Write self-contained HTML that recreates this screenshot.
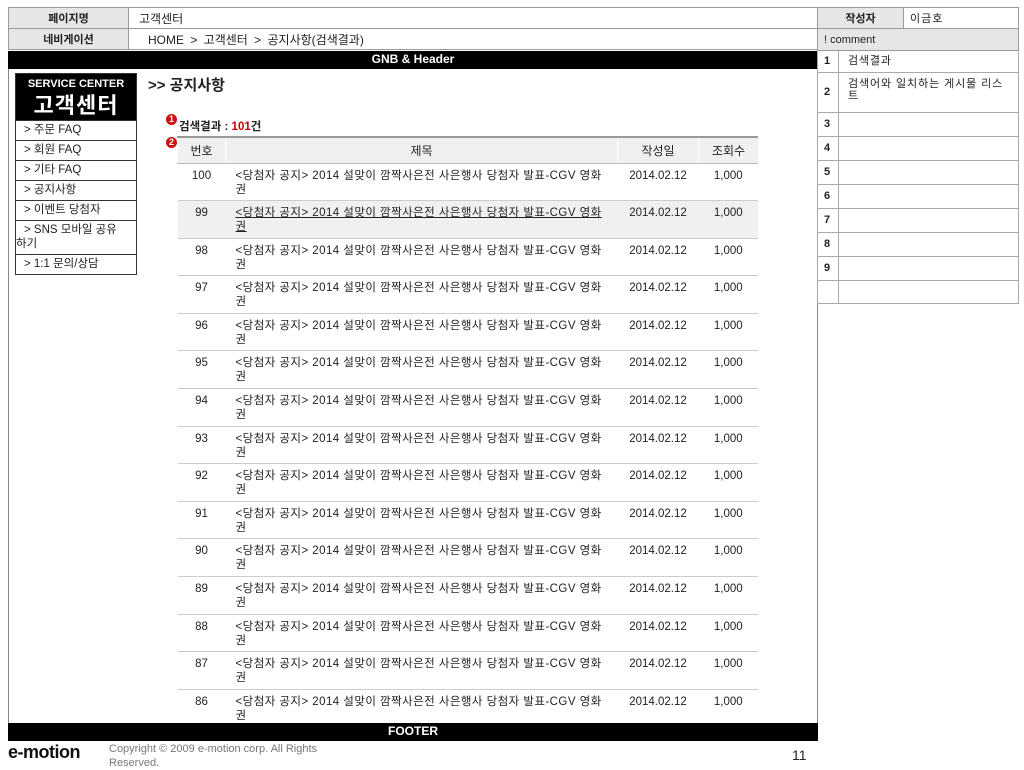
<!DOCTYPE html>
<html><head><meta charset="utf-8"><style>
*{margin:0;padding:0;box-sizing:border-box}
body{width:1024px;height:768px;background:#fff;position:relative;overflow:hidden;font-family:"Liberation Sans","Noto Sans CJK KR",sans-serif;font-size:12px;color:#222}
.a{position:absolute}
.cell{position:absolute;border:1px solid #9a9a9a;display:flex;align-items:center}
.lab{background:#e6e6e6;justify-content:center;font-weight:bold;font-size:11px}
.bar{position:absolute;background:#000;color:#fff;font-weight:bold;text-align:center;font-size:12px;line-height:17px}
.menu div{height:20px;border:1px solid #333;border-top:none;padding-left:8px;font-size:11.5px;line-height:18px}
table{border-collapse:collapse;position:absolute;left:177px;top:136px;width:581px}
td{font-size:11.5px;vertical-align:top;padding-top:5px;border-bottom:1px solid #ccc;height:37.6px;line-height:14px}
th{background:#f0f0f0;font-weight:normal;height:26px;border-top:2px solid #999;border-bottom:1px solid #bbb;font-size:12px;border-left:1px solid #fff}
td.n,td.d,td.v{text-align:center}
td.t{letter-spacing:0.45px}
tr.g td{background:#f0f0f0}
tr.g td.t{text-decoration:underline}
.cm div{position:absolute;left:0;width:201px;border-bottom:1px solid #aaa;font-size:11px}
.num{position:absolute;width:11px;height:11px;border-radius:50%;background:#d01010;color:#fff;font-size:9px;font-weight:bold;text-align:center;line-height:11px}
</style></head><body>
<div class="cell lab" style="left:8px;top:7px;width:121px;height:22px">페이지명</div>
<div class="cell" style="left:128px;top:7px;width:690px;height:22px;padding-left:10px;font-size:12px">고객센터</div>
<div class="cell lab" style="left:8px;top:28px;width:121px;height:22px">네비게이션</div>
<div class="cell" style="left:128px;top:28px;width:690px;height:22px;padding-left:19px;font-size:12px;word-spacing:3px">HOME &gt; 고객센터 &gt; 공지사항(검색결과)</div>
<div class="cell lab" style="left:817px;top:7px;width:87px;height:22px">작성자</div>
<div class="cell" style="left:903px;top:7px;width:116px;height:22px;padding-left:6px;font-size:11px;letter-spacing:1px">이금호</div>
<div class="cell" style="left:817px;top:28px;width:202px;height:23px;background:#e6e6e6;padding-left:6px;font-size:11px">! comment</div>
<div class="a" style="left:8px;top:51px;width:810px;height:690px;border:1px solid #888"></div>
<div class="bar" style="left:8px;top:51px;width:810px;height:18px">GNB &amp; Header</div>
<div class="a" style="left:817px;top:50px;width:202px;height:254px;border:1px solid #aaa;border-top:none"></div>
<div class="a" style="left:838px;top:50px;width:1px;height:253px;background:#aaa"></div>
<div class="cm a" style="left:817px;top:50px">
<div style="top:0;height:23px;line-height:22px"><span class="a" style="left:7px;font-weight:bold">1</span><span class="a" style="left:31px;letter-spacing:0.8px">검색결과</span></div>
<div style="top:23px;height:40px;"><span class="a" style="left:7px;top:13px;font-weight:bold">2</span><span class="a" style="left:31px;top:5px;width:170px;line-height:12px;letter-spacing:0.9px">검색어와 일치하는 게시물 리스<br>트</span></div>
<div style="top:63px;height:24px;line-height:22px"><span class="a" style="left:7px;font-weight:bold">3</span></div>
<div style="top:87px;height:24px;line-height:22px"><span class="a" style="left:7px;font-weight:bold">4</span></div>
<div style="top:111px;height:24px;line-height:22px"><span class="a" style="left:7px;font-weight:bold">5</span></div>
<div style="top:135px;height:24px;line-height:22px"><span class="a" style="left:7px;font-weight:bold">6</span></div>
<div style="top:159px;height:24px;line-height:22px"><span class="a" style="left:7px;font-weight:bold">7</span></div>
<div style="top:183px;height:24px;line-height:22px"><span class="a" style="left:7px;font-weight:bold">8</span></div>
<div style="top:207px;height:24px;line-height:22px"><span class="a" style="left:7px;font-weight:bold">9</span></div>
<div style="top:231px;height:23px"></div>
</div>
<div class="a" style="left:15px;top:73px;width:122px;height:48px;background:#000;color:#fff;text-align:center;border:1px solid #333">
<div style="font-size:11px;font-weight:bold;line-height:20px">SERVICE CENTER</div>
<div style="font-size:22px;font-weight:bold;line-height:24px;letter-spacing:1px">고객센터</div></div>
<div class="a menu" style="left:15px;top:121px;width:122px">
<div>&gt; 주문 FAQ</div><div>&gt; 회원 FAQ</div><div>&gt; 기타 FAQ</div><div>&gt; 공지사항</div><div>&gt; 이벤트 당첨자</div>
<div style="height:34px;line-height:14px;padding-top:2px;padding-left:8px;text-indent:0">&gt; SNS 모바일 공유<br><span style="margin-left:-8px">하기</span></div>
<div>&gt; 1:1 문의/상담</div></div>
<div class="a" style="left:148px;top:74px;font-size:15px;font-weight:bold">&gt;&gt; 공지사항</div>
<div class="num" style="left:166px;top:114px">1</div>
<div class="a" style="left:179px;top:118px;font-size:11.5px;font-weight:bold">검색결과 : <span style="color:#c00">101</span>건</div>
<div class="num" style="left:166px;top:137px">2</div>
<table>
<tr><th style="width:48px">번호</th><th style="width:392px">제목</th><th style="width:81px">작성일</th><th>조회수</th></tr>
<tr><td class="n">100</td><td class="t" style="padding-left:10px">&lt;당첨자 공지&gt; 2014 설맞이 깜짝사은전 사은행사 당첨자 발표-CGV 영화<br>권</td><td class="d">2014.02.12</td><td class="v">1,000</td></tr>
<tr class="g"><td class="n">99</td><td class="t" style="padding-left:10px">&lt;당첨자 공지&gt; 2014 설맞이 깜짝사은전 사은행사 당첨자 발표-CGV 영화<br>권</td><td class="d">2014.02.12</td><td class="v">1,000</td></tr>
<tr><td class="n">98</td><td class="t" style="padding-left:10px">&lt;당첨자 공지&gt; 2014 설맞이 깜짝사은전 사은행사 당첨자 발표-CGV 영화<br>권</td><td class="d">2014.02.12</td><td class="v">1,000</td></tr>
<tr><td class="n">97</td><td class="t" style="padding-left:10px">&lt;당첨자 공지&gt; 2014 설맞이 깜짝사은전 사은행사 당첨자 발표-CGV 영화<br>권</td><td class="d">2014.02.12</td><td class="v">1,000</td></tr>
<tr><td class="n">96</td><td class="t" style="padding-left:10px">&lt;당첨자 공지&gt; 2014 설맞이 깜짝사은전 사은행사 당첨자 발표-CGV 영화<br>권</td><td class="d">2014.02.12</td><td class="v">1,000</td></tr>
<tr><td class="n">95</td><td class="t" style="padding-left:10px">&lt;당첨자 공지&gt; 2014 설맞이 깜짝사은전 사은행사 당첨자 발표-CGV 영화<br>권</td><td class="d">2014.02.12</td><td class="v">1,000</td></tr>
<tr><td class="n">94</td><td class="t" style="padding-left:10px">&lt;당첨자 공지&gt; 2014 설맞이 깜짝사은전 사은행사 당첨자 발표-CGV 영화<br>권</td><td class="d">2014.02.12</td><td class="v">1,000</td></tr>
<tr><td class="n">93</td><td class="t" style="padding-left:10px">&lt;당첨자 공지&gt; 2014 설맞이 깜짝사은전 사은행사 당첨자 발표-CGV 영화<br>권</td><td class="d">2014.02.12</td><td class="v">1,000</td></tr>
<tr><td class="n">92</td><td class="t" style="padding-left:10px">&lt;당첨자 공지&gt; 2014 설맞이 깜짝사은전 사은행사 당첨자 발표-CGV 영화<br>권</td><td class="d">2014.02.12</td><td class="v">1,000</td></tr>
<tr><td class="n">91</td><td class="t" style="padding-left:10px">&lt;당첨자 공지&gt; 2014 설맞이 깜짝사은전 사은행사 당첨자 발표-CGV 영화<br>권</td><td class="d">2014.02.12</td><td class="v">1,000</td></tr>
<tr><td class="n">90</td><td class="t" style="padding-left:10px">&lt;당첨자 공지&gt; 2014 설맞이 깜짝사은전 사은행사 당첨자 발표-CGV 영화<br>권</td><td class="d">2014.02.12</td><td class="v">1,000</td></tr>
<tr><td class="n">89</td><td class="t" style="padding-left:10px">&lt;당첨자 공지&gt; 2014 설맞이 깜짝사은전 사은행사 당첨자 발표-CGV 영화<br>권</td><td class="d">2014.02.12</td><td class="v">1,000</td></tr>
<tr><td class="n">88</td><td class="t" style="padding-left:10px">&lt;당첨자 공지&gt; 2014 설맞이 깜짝사은전 사은행사 당첨자 발표-CGV 영화<br>권</td><td class="d">2014.02.12</td><td class="v">1,000</td></tr>
<tr><td class="n">87</td><td class="t" style="padding-left:10px">&lt;당첨자 공지&gt; 2014 설맞이 깜짝사은전 사은행사 당첨자 발표-CGV 영화<br>권</td><td class="d">2014.02.12</td><td class="v">1,000</td></tr>
<tr><td class="n">86</td><td class="t" style="padding-left:10px">&lt;당첨자 공지&gt; 2014 설맞이 깜짝사은전 사은행사 당첨자 발표-CGV 영화<br>권</td><td class="d">2014.02.12</td><td class="v">1,000</td></tr>
</table>
<div class="bar" style="left:8px;top:723px;width:810px;height:18px">FOOTER</div>
<div class="a" style="left:8px;top:742px;font-size:18px;font-weight:bold;color:#111;letter-spacing:-0.5px">e-motion</div>
<div class="a" style="left:109px;top:742px;font-size:11px;color:#777;line-height:14px;width:240px">Copyright © 2009 e-motion corp. All Rights Reserved.</div>
<div class="a" style="left:792px;top:747px;font-size:14px;color:#222">11</div>
</body></html>
